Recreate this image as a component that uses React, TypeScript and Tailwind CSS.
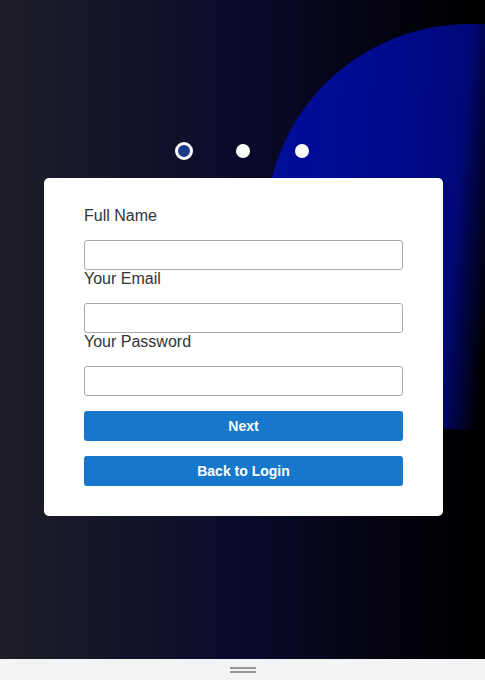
import React from "react";

export default function App() {
  const fields = ["Full Name", "Your Email", "Your Password"];
  return (
    <div className="w-[485px] h-[680px] flex flex-col overflow-hidden" style={{ fontFamily: '"Liberation Sans", Arial, sans-serif' }}>
      <div className="relative flex-1 overflow-hidden bg-[linear-gradient(to_right,#1e1e27_0%,#11132a_30%,#0a0b2c_50%,#03030f_80%,#000_100%)]">
        <div className="absolute left-[266px] top-[24px] w-[440px] h-[406px] rounded-full bg-[linear-gradient(95deg,#000e9c_0px,#000a8c_140px,#000878_205px,#000_245px)]" />
        <div className="relative flex flex-col items-center pt-[142px]">
          <div className="flex items-center h-[18px]">
            <div className="w-[59px] flex justify-center">
              <div className="w-[18px] h-[18px] rounded-full border-[3px] border-white bg-[#1e3a8a]" />
            </div>
            <div className="w-[59px] flex justify-center">
              <div className="w-[14px] h-[14px] rounded-full bg-white" />
            </div>
            <div className="w-[59px] flex justify-center">
              <div className="w-[14px] h-[14px] rounded-full bg-white" />
            </div>
          </div>
          <div className="mt-[18px] ml-[2px] w-[399px] bg-white rounded-[5px] px-[40px] pt-[29px] pb-[30px] flex flex-col">
            {fields.map((f) => (
              <div key={f} className="flex flex-col">
                <label className="text-[16px] leading-[18px] text-[#333] mb-[15px]">{f}</label>
                <input
                  type={f === "Your Password" ? "password" : "text"}
                  className="h-[30px] w-full border border-[#a9a9a9] rounded-[3px] bg-white outline-none"
                />
              </div>
            ))}
            <button className="mt-[15px] h-[30px] w-full rounded-[3px] bg-[#1677cc] text-white font-bold text-[14px]">
              Next
            </button>
            <button className="mt-[15px] h-[30px] w-full rounded-[3px] bg-[#1677cc] text-white font-bold text-[14px]">
              Back to Login
            </button>
          </div>
        </div>
      </div>
      <div className="h-[21px] bg-[#f2f3f5] flex items-center justify-center">
        <div className="flex flex-col gap-[2px] w-[26px]">
          <div className="h-[2px] bg-[#9a9a9a]" />
          <div className="h-[2px] bg-[#9a9a9a]" />
        </div>
      </div>
    </div>
  );
}
